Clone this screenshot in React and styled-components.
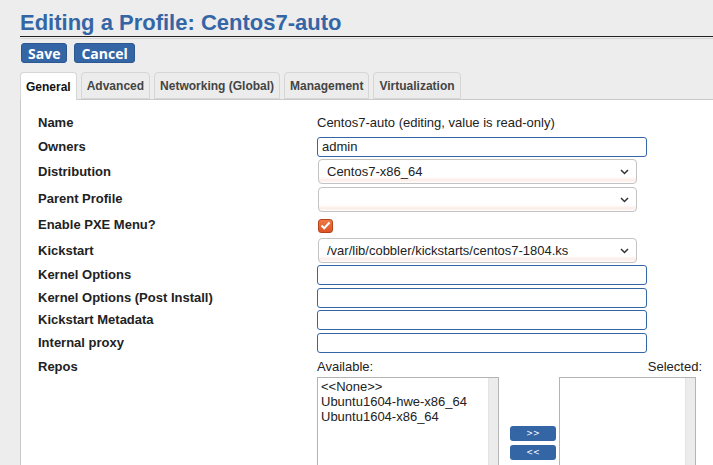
import React from "react";
import styled, { createGlobalStyle } from "styled-components";

const GlobalStyle = createGlobalStyle`
  html, body {
    margin: 0;
    padding: 0;
    background: #ededed;
    overflow: hidden;
    font-family: "Liberation Sans", Arial, sans-serif;
  }
`;

const Page = styled.div`
  padding-left: 20px;
`;

const Title = styled.h1`
  margin: 0;
  padding-top: 10px;
  font-size: 22px;
  line-height: 26px;
  font-weight: bold;
  color: #3466a6;
  border-bottom: 1px solid #222;
  box-shadow: 0 1px 0 #ededed, 0 2px 0 #d6d6d6;
`;

const Toolbar = styled.div`
  display: flex;
  gap: 7px;
  margin: 6px 0 0 1px;
`;

const Button = styled.button`
  height: 20px;
  padding: 0 6px;
  background: #3466a6;
  border: 1px solid #2b5891;
  border-radius: 3px;
  color: #fff;
  font-family: "Open Sans", sans-serif;
  font-weight: bold;
  font-size: 14px;
  line-height: 17px;
`;

const TabBar = styled.div`
  display: flex;
  align-items: flex-end;
  gap: 4px;
  height: 27px;
  margin-top: 9px;
  border-bottom: 1px solid #c9c9c9;
`;

const Tab = styled.div`
  box-sizing: border-box;
  height: ${(p) => (p.$active ? "28px" : "27px")};
  margin-bottom: ${(p) => (p.$active ? "-1px" : "0")};
  padding: 0 5px;
  display: flex;
  align-items: center;
  background: ${(p) => (p.$active ? "#fff" : "#ececec")};
  border: 1px solid #d6d6d6;
  border-bottom: ${(p) => (p.$active ? "none" : "1px solid #d6d6d6")};
  border-radius: 4px 4px 0 0;
  font-size: 12px;
  font-weight: bold;
  color: ${(p) => (p.$active ? "#111" : "#444")};
`;

const Panel = styled.div`
  background: #fff;
  border-left: 1px solid #c9c9c9;
  padding: 10px 0 0 17px;
  min-height: 400px;
`;

const Row = styled.div`
  display: grid;
  grid-template-columns: 279px 1fr;
  align-items: ${(p) => (p.$top ? "start" : "center")};
  height: ${(p) => p.$h}px;
  padding-top: ${(p) => (p.$top ? "5px" : "0")};
`;

const Label = styled.div`
  font-size: 13px;
  font-weight: bold;
  color: #222;
  line-height: 16px;
`;

const Value = styled.div`
  font-size: 13px;
  color: #222;
`;

const TextInput = styled.input`
  box-sizing: border-box;
  width: 330px;
  height: 20px;
  margin: 0;
  padding: 0 4px;
  border: 1px solid #3466a6;
  border-radius: 3px;
  font-family: "Liberation Sans", Arial, sans-serif;
  font-size: 13px;
  color: #222;
  background: #fff;
  outline: none;
`;

const SelectWrap = styled.div`
  position: relative;
  width: 319px;
  margin-left: 1px;
`;

const Select = styled.select`
  box-sizing: border-box;
  width: 100%;
  height: 25px;
  margin: 0;
  padding: 0 24px 0 8px;
  appearance: none;
  border: 1px solid #c3c3c3;
  border-radius: 4px;
  background: linear-gradient(to bottom, #fff 0%, #fff 74%, #fcece6 88%, #fff 100%);
  font-family: "Liberation Sans", Arial, sans-serif;
  font-size: 13px;
  color: #222;
`;

const Chevron = styled.svg`
  position: absolute;
  right: 8px;
  top: 10px;
  pointer-events: none;
`;

const CheckBox = styled.span`
  display: inline-flex;
  align-items: center;
  justify-content: center;
  box-sizing: border-box;
  width: 15px;
  height: 14px;
  margin-left: 1px;
  border: 1px solid #b5441c;
  border-radius: 3px;
  background: linear-gradient(to bottom, #f07a45, #dd5424);
`;

const Repos = styled.div`
  width: 385px;
`;

const RepoHeader = styled.div`
  display: flex;
  justify-content: space-between;
  font-size: 13px;
  line-height: 16px;
  color: #222;
`;

const RepoBody = styled.div`
  display: flex;
  align-items: center;
  margin-top: 2px;
`;

const ListBox = styled.div`
  box-sizing: border-box;
  display: flex;
  width: ${(p) => p.$w}px;
  height: 131px;
  border: 1px solid #b4b4b4;
  background: #fff;
`;

const ListItems = styled.div`
  flex: 1;
  padding: 1px 0 0 3px;
  font-size: 13px;
  line-height: 15px;
  color: #222;
`;

const ScrollTrack = styled.div`
  width: 9px;
  background: #ececec;
  border-left: 1px solid #e4e4e4;
`;

const MoveButtons = styled.div`
  display: flex;
  flex-direction: column;
  gap: 4px;
  margin: 0 3px 0 11px;
`;

const MoveButton = styled.button`
  width: 46px;
  height: 15px;
  padding: 0;
  background: #3466a6;
  border: none;
  border-radius: 3px;
  color: #fff;
  font-family: "DejaVu Sans", sans-serif;
  font-size: 8px;
  line-height: 15px;
`;

const SelectField = ({ value }) => (
  <SelectWrap>
    <Select defaultValue={value}>
      <option>{value}</option>
    </Select>
    <Chevron width="9" height="6" viewBox="0 0 9 6">
      <path d="M1 1 L4.5 4.5 L8 1" fill="none" stroke="#333" strokeWidth="1.5" />
    </Chevron>
  </SelectWrap>
);

const tabs = ["General", "Advanced", "Networking (Global)", "Management", "Virtualization"];

export default function App() {
  return (
    <>
      <GlobalStyle />
      <Page>
        <Title>Editing a Profile: Centos7-auto</Title>
        <Toolbar>
          <Button>Save</Button>
          <Button>Cancel</Button>
        </Toolbar>
        <TabBar>
          {tabs.map((t, i) => (
            <Tab key={t} $active={i === 0}>
              {t}
            </Tab>
          ))}
        </TabBar>
        <Panel>
          <Row $h={25}>
            <Label>Name</Label>
            <Value>Centos7-auto (editing, value is read-only)</Value>
          </Row>
          <Row $h={23}>
            <Label>Owners</Label>
            <TextInput defaultValue="admin" />
          </Row>
          <Row $h={27}>
            <Label>Distribution</Label>
            <SelectField value="Centos7-x86_64" />
          </Row>
          <Row $h={28}>
            <Label>Parent Profile</Label>
            <SelectField value="" />
          </Row>
          <Row $h={24}>
            <Label>Enable PXE Menu?</Label>
            <div>
              <CheckBox>
                <svg width="11" height="9" viewBox="0 0 11 9">
                  <path d="M1.5 4.5 L4.2 7.2 L9.5 1.5" fill="none" stroke="#fff" strokeWidth="2" />
                </svg>
              </CheckBox>
            </div>
          </Row>
          <Row $h={27}>
            <Label>Kickstart</Label>
            <SelectField value="/var/lib/cobbler/kickstarts/centos7-1804.ks" />
          </Row>
          <Row $h={22}>
            <Label>Kernel Options</Label>
            <TextInput />
          </Row>
          <Row $h={23}>
            <Label>Kernel Options (Post Install)</Label>
            <TextInput />
          </Row>
          <Row $h={22}>
            <Label>Kickstart Metadata</Label>
            <TextInput />
          </Row>
          <Row $h={23}>
            <Label>Internal proxy</Label>
            <TextInput />
          </Row>
          <Row $h={160} $top>
            <Label>Repos</Label>
            <Repos>
              <RepoHeader>
                <span>Available:</span>
                <span>Selected:</span>
              </RepoHeader>
              <RepoBody>
                <ListBox $w={182}>
                  <ListItems>
                    <div>&lt;&lt;None&gt;&gt;</div>
                    <div>Ubuntu1604-hwe-x86_64</div>
                    <div>Ubuntu1604-x86_64</div>
                  </ListItems>
                  <ScrollTrack />
                </ListBox>
                <MoveButtons>
                  <MoveButton>&gt;&gt;</MoveButton>
                  <MoveButton>&lt;&lt;</MoveButton>
                </MoveButtons>
                <ListBox $w={137}>
                  <ListItems />
                  <ScrollTrack />
                </ListBox>
              </RepoBody>
            </Repos>
          </Row>
        </Panel>
      </Page>
    </>
  );
}
